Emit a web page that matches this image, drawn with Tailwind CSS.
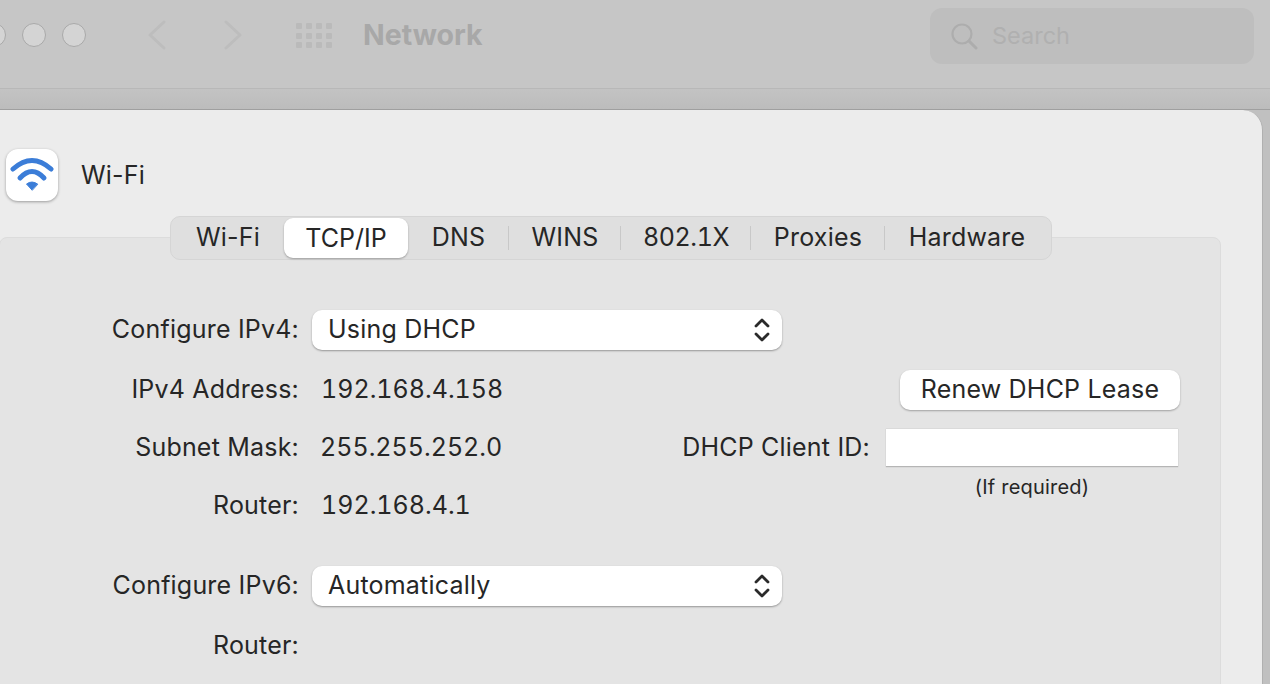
<!doctype html>
<html>
<head>
<meta charset="utf-8">
<title>Network</title>
<script src="https://cdn.jsdelivr.net/npm/@tailwindcss/browser@4"></script>
</head>
<body class="w-[1270px] h-[684px] overflow-hidden bg-[#c0c0c0] font-['Inter','Noto_Sans',sans-serif] text-[#262626]">

<!-- toolbar -->
<header class="h-[89px] flex items-start bg-[#c6c6c6] border-b border-[#b8b8b8]">
    <div class="flex gap-4 -ml-[18px] mt-[23px]">
        <span class="size-6 rounded-full bg-[#d4d4d4] border border-[#a9a9a9]"></span>
        <span class="size-6 rounded-full bg-[#d4d4d4] border border-[#a9a9a9]"></span>
        <span class="size-6 rounded-full bg-[#d4d4d4] border border-[#a9a9a9]"></span>
    </div>
    <svg class="ml-[61px] mt-[20px]" width="20" height="30" viewBox="0 0 20 30" fill="none" stroke="#bdbdbd" stroke-width="3" stroke-linecap="round" stroke-linejoin="round"><path d="M17 2 3 15l14 13"/></svg>
    <svg class="ml-[56px] mt-[20px]" width="20" height="30" viewBox="0 0 20 30" fill="none" stroke="#bdbdbd" stroke-width="3" stroke-linecap="round" stroke-linejoin="round"><path d="m3 2 14 13L3 28"/></svg>
    <div class="ml-[53px] mt-[23px] grid grid-cols-4 gap-x-1 gap-y-[3.5px]">
        <i class="size-1.5 rounded-[1px] bg-[#bababa]"></i><i class="size-1.5 rounded-[1px] bg-[#bababa]"></i><i class="size-1.5 rounded-[1px] bg-[#bababa]"></i><i class="size-1.5 rounded-[1px] bg-[#bababa]"></i>
        <i class="size-1.5 rounded-[1px] bg-[#bababa]"></i><i class="size-1.5 rounded-[1px] bg-[#bababa]"></i><i class="size-1.5 rounded-[1px] bg-[#bababa]"></i><i class="size-1.5 rounded-[1px] bg-[#bababa]"></i>
        <i class="size-1.5 rounded-[1px] bg-[#bababa]"></i><i class="size-1.5 rounded-[1px] bg-[#bababa]"></i><i class="size-1.5 rounded-[1px] bg-[#bababa]"></i><i class="size-1.5 rounded-[1px] bg-[#bababa]"></i>
    </div>
    <h1 class="ml-[31px] mt-[17px] text-[28.5px] leading-9 font-bold text-[#a8a8a8]">Network</h1>
    <div class="ml-auto mr-4 mt-2 w-[324px] h-14 flex items-center rounded-xl bg-[#bebebe]">
        <svg class="ml-[21px]" width="27" height="27" viewBox="0 0 27 27" fill="none" stroke="#adadad" stroke-width="2.2" stroke-linecap="round"><circle cx="11" cy="11" r="9.5"/><path d="m18 18 7 7" stroke-width="3"/></svg>
        <span class="ml-[14px] text-[23.5px] text-[#b0b0b0]">Search</span>
    </div>
</header>

<div class="h-[21px] bg-gradient-to-b from-[#c3c3c3] to-[#bcbcbc] border-b border-[#9f9f9f]"></div>

<!-- preferences panel -->
<main class="w-[1263px] h-[574px] bg-[#ececec] rounded-tr-[20px] border-r border-[#b0b0b0] tracking-[0.2px]">
    <div class="flex items-center pt-[39px] pl-1.5 h-[91px]">
        <div class="size-[52px] rounded-xl bg-white shadow-[0_1px_3px_rgba(0,0,0,0.35)]">
            <svg width="52" height="52" viewBox="0 0 52 52" fill="none" stroke="#3b7dd8" stroke-linecap="round">
                <path d="M7 20Q26 3 45 20" stroke-width="5"/>
                <path d="M14 29Q26 16 38 29" stroke-width="5"/>
                <path d="M26 41 20.500 35Q26 31 31.500 35Z" fill="#3b7dd8" stroke-width="1" stroke-linejoin="round"/>
            </svg>
        </div>
        <span class="ml-[23px] mt-0.5 text-[25px]">Wi-Fi</span>
    </div>

    <section class="w-[1222px] h-[460px] mt-[36px] -ml-px bg-[#e4e4e4] border border-[#dcdcdc] rounded-lg relative">
        <!-- tabs -->
        <nav class="absolute left-[170px] -top-[22px] w-[882px] h-11 flex items-center px-px rounded-[10px] bg-[#dfdfdf] border border-[#d5d5d5] text-[25px]">
            <span class="w-[112px] text-center">Wi-Fi</span>
            <span class="w-[124px] h-10 leading-10 text-center tracking-normal bg-white rounded-[9px] shadow-[0_1px_2px_rgba(0,0,0,0.3)]">TCP/IP</span>
            <span class="w-[101px] text-center">DNS</span>
            <i class="w-px h-6 -ml-px bg-[#c8c8c8]"></i>
            <span class="w-[112px] text-center">WINS</span>
            <i class="w-px h-6 -ml-px bg-[#c8c8c8]"></i>
            <span class="w-[130px] text-center tabular-nums tracking-[-0.4px]">802.1X</span>
            <i class="w-px h-6 -ml-px bg-[#c8c8c8]"></i>
            <span class="w-[134px] text-center">Proxies</span>
            <i class="w-px h-6 -ml-px bg-[#c8c8c8]"></i>
            <span class="w-[164px] text-center">Hardware</span>
        </nav>

        <!-- form -->
        <div class="pt-[63px] text-[25px]">
            <div class="h-[58px] flex items-center">
                <label class="w-[299px] text-right">Configure IPv4:</label>
                <div class="ml-[13px] w-[470px] h-10 pl-4 pr-3 flex items-center justify-between bg-white rounded-[10px] shadow-[0_1px_2px_rgba(0,0,0,0.35)]">
                    <span>Using DHCP</span>
                    <svg width="16" height="24" viewBox="0 0 16 24" fill="none" stroke="#2a2a2a" stroke-width="2.8" stroke-linecap="round" stroke-linejoin="round"><path d="m2 8 6-6 6 6M2 16l6 6 6-6"/></svg>
                </div>
            </div>
            <div class="h-[58px] mt-0.5 flex items-center">
                <label class="w-[299px] text-right">IPv4 Address:</label>
                <span class="ml-[22px] tabular-nums tracking-normal">192.168.4.158</span>
                <button class="ml-auto mr-10 w-[280px] h-10 bg-white rounded-[10px] shadow-[0_1px_2px_rgba(0,0,0,0.3)]">Renew DHCP Lease</button>
            </div>
            <div class="h-[58px] flex items-center">
                <label class="w-[299px] text-right">Subnet Mask:</label>
                <span class="ml-[21px] tabular-nums tracking-normal">255.255.252.0</span>
                <label class="ml-auto">DHCP Client ID:</label>
                <div class="ml-[16px] mr-[42px] w-[292px] h-[38px] bg-white border-b border-[#b5b5b5] shadow-[0_0_1px_rgba(0,0,0,0.25)]"></div>
            </div>
            <div class="h-[58px] flex items-center">
                <label class="w-[299px] text-right">Router:</label>
                <span class="ml-[22px] tabular-nums tracking-normal">192.168.4.1</span>
                <span class="ml-auto mr-[42px] w-[292px] self-start -mt-0.5 text-center text-[20px] leading-6">(If required)</span>
            </div>
            <div class="h-[58px] mt-[22px] flex items-center">
                <label class="w-[299px] text-right">Configure IPv6:</label>
                <div class="ml-[13px] w-[470px] h-10 pl-4 pr-3 flex items-center justify-between bg-white rounded-[10px] shadow-[0_1px_2px_rgba(0,0,0,0.35)]">
                    <span>Automatically</span>
                    <svg width="16" height="24" viewBox="0 0 16 24" fill="none" stroke="#2a2a2a" stroke-width="2.8" stroke-linecap="round" stroke-linejoin="round"><path d="m2 8 6-6 6 6M2 16l6 6 6-6"/></svg>
                </div>
            </div>
            <div class="h-[58px] mt-0.5 flex items-center">
                <label class="w-[299px] text-right">Router:</label>
            </div>
        </div>
    </section>
</main>
</body>
</html>
